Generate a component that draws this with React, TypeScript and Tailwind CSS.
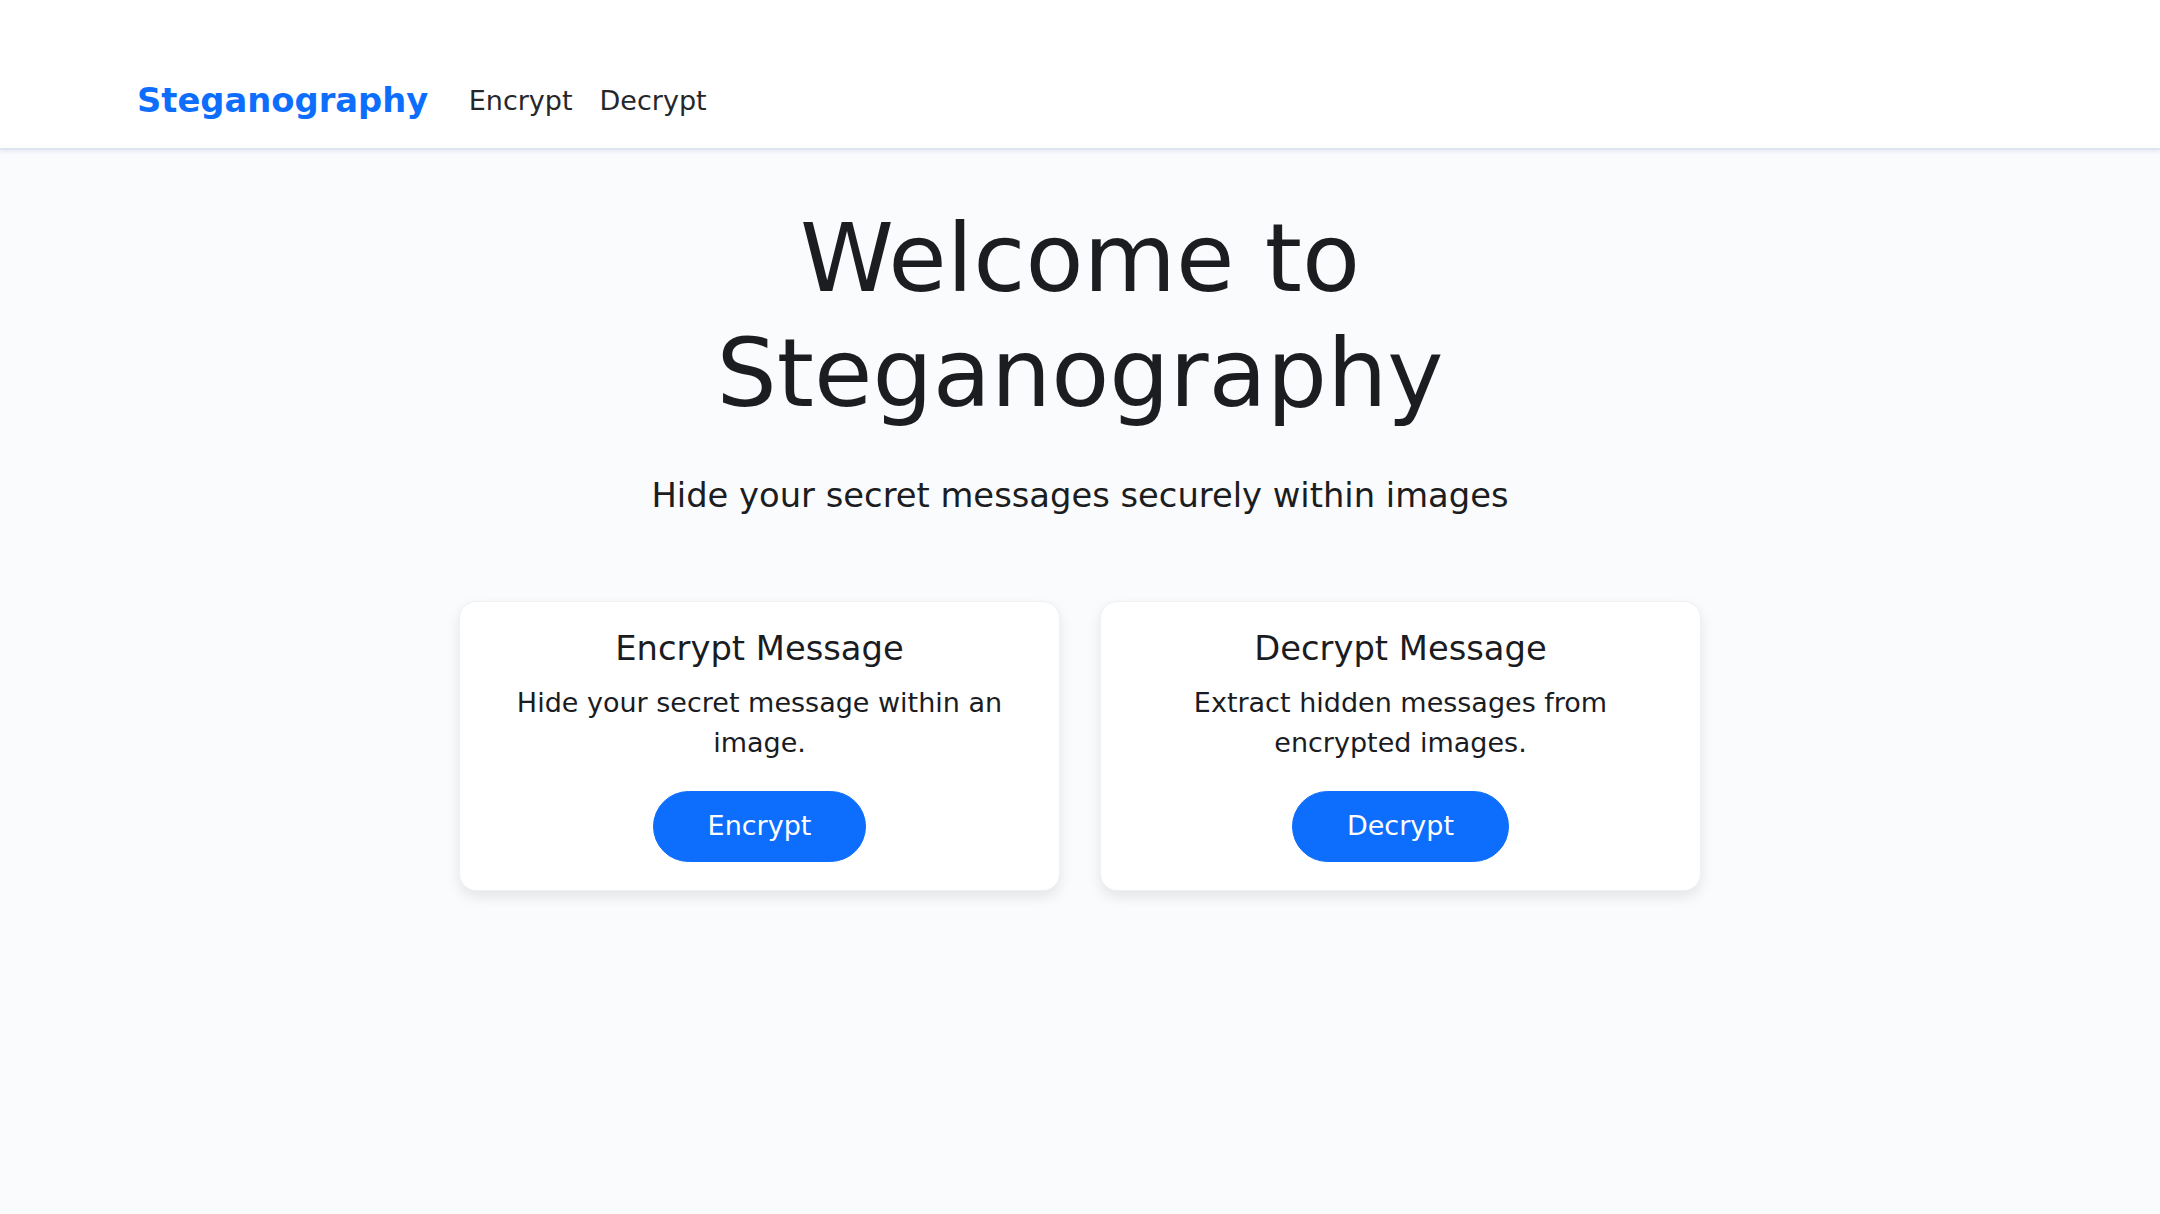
import React from "react";

const font = "font-['DejaVu_Sans',_'Liberation_Sans',_sans-serif]";

function Card({ title, text, action }: { title: string; text: string; action: string }) {
  return (
    <div className="w-[601px] rounded-[17px] bg-white border border-[#eef0f3] shadow-[0_6px_14px_rgba(0,0,0,0.09)] px-[27px] pt-[27px] pb-[28px] flex flex-col items-center text-center">
      <h5 className="text-[33.75px] leading-[40.5px] text-[#1a1c1f] mb-[13.5px]">{title}</h5>
      <p className="text-[27px] leading-[40.5px] text-[#1a1c1f] mb-[27px] px-[10px]">{text}</p>
      <button className="rounded-full bg-[#0d6efd] border-[1.7px] border-[#0d6efd] text-white text-[27px] leading-[40.5px] py-[14.5px] px-[54px]">
        {action}
      </button>
    </div>
  );
}

export default function App() {
  return (
    <div className={`${font} min-h-[1214px] w-full bg-[#fafbfd] flex flex-col`}>
      <header className="h-[150px] bg-white border-b-[2px] border-[#dde5ee] shadow-[0_2px_4px_rgba(180,195,215,0.25)] pt-[55px]">
        <div className="h-full flex items-center pl-[137px]">
          <a className="text-[33.75px] leading-[50.6px] font-bold text-[#0d6efd] mr-[27px]">Steganography</a>
          <nav className="flex items-center">
            <a className="px-[13.5px] text-[27px] leading-[40.5px] text-[#25272b]">Encrypt</a>
            <a className="px-[13.5px] text-[27px] leading-[40.5px] text-[#25272b]">Decrypt</a>
          </nav>
        </div>
      </header>
      <main className="flex flex-col items-center pt-[51px]">
        <h1 className="max-w-[1243px] text-center text-[95px] leading-[115px] text-[#1c1d20] mb-[40px]">
          Welcome to Steganography
        </h1>
        <p className="text-[33.75px] leading-[50.6px] text-[#1c1d20] mb-[79px]">
          Hide your secret messages securely within images
        </p>
        <div className="flex gap-[40px]">
          <Card title="Encrypt Message" text="Hide your secret message within an image." action="Encrypt" />
          <Card title="Decrypt Message" text="Extract hidden messages from encrypted images." action="Decrypt" />
        </div>
      </main>
    </div>
  );
}
